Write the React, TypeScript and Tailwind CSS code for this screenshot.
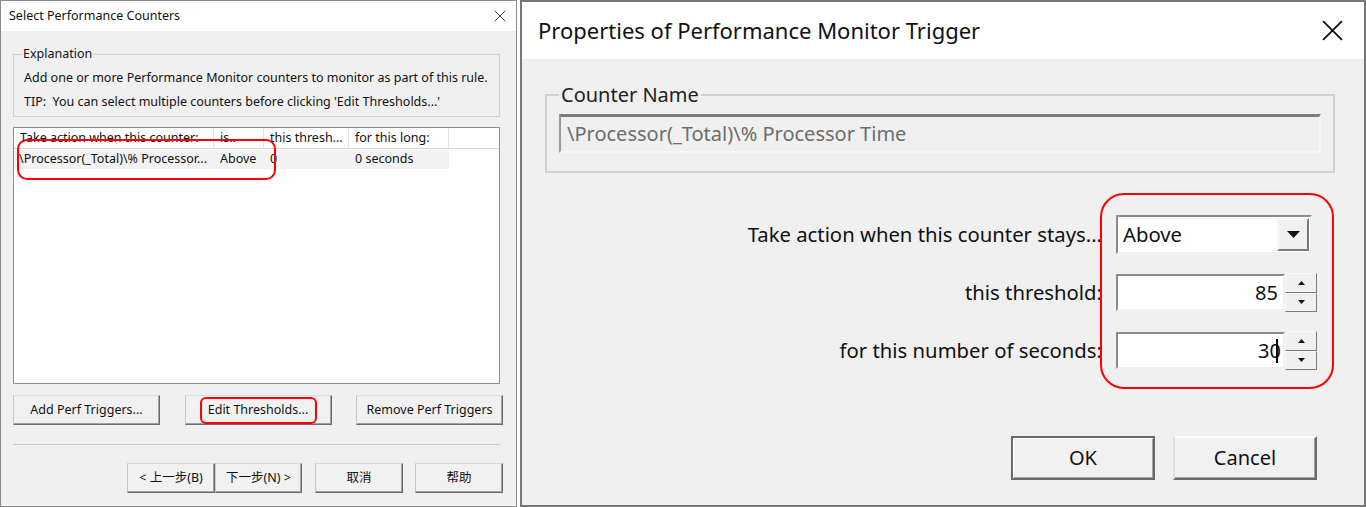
import React from "react";

const uiFont = { fontFamily: '"Noto Sans", "Noto Sans CJK SC", sans-serif' };

function CloseX({ size, stroke }: { size: number; stroke: number }) {
  return (
    <svg width={size} height={size} viewBox="0 0 20 20">
      <path d="M1 1 L19 19 M19 1 L1 19" stroke="#111" strokeWidth={stroke} fill="none" />
    </svg>
  );
}

function SmallButton({ label, className = "" }: { label: string; className?: string }) {
  return (
    <div
      className={
        "flex h-[30px] items-center justify-center border border-t-[#dcdcdc] border-l-[#c8c8c8] border-r-[#6b6b6b] border-b-[#6b6b6b] bg-[#f1f1f1] shadow-[inset_-1px_-1px_0_#a0a0a0] text-[12.5px] text-[#111] " +
        className
      }
    >
      {label}
    </div>
  );
}

function SelectCountersDialog() {
  return (
    <div className="relative flex h-[507px] w-[517px] flex-col border border-[#8a8a8a] bg-[#f0f0f0]" style={uiFont}>
      <div className="flex h-[30px] items-center justify-between bg-white pl-[8px] pr-[10px] text-[12.5px] text-[#111]">
        <span>Select Performance Counters</span>
        <CloseX size={12} stroke={1.3} />
      </div>

      <div className="flex flex-col pl-[12px] pt-[15px]">
        <fieldset className="w-[487px] border border-[#d0d0d0] pb-[2px] pl-[8px]">
          <legend className="px-[1px] text-[12.5px] leading-[16px] text-[#111]">Explanation</legend>
          <div className="pl-[2px] pt-[4px] text-[12.5px] leading-[24px] text-[#111]">
            <div>Add one or more Performance Monitor counters to monitor as part of this rule.</div>
            <div>TIP:&nbsp; You can select multiple counters before clicking 'Edit Thresholds...'</div>
          </div>
        </fieldset>

        <div className="mt-[10px] h-[257px] w-[487px] border border-[#8e8e8e] bg-white text-[12.5px] text-[#111]">
          <div className="flex h-[21px] border-b border-[#d5d5d5]">
            <div className="w-[200px] border-r border-[#e3e3e3] pl-[6px] leading-[20px]">Take action when this counter:</div>
            <div className="w-[50px] border-r border-[#e3e3e3] pl-[6px] leading-[20px]">is..</div>
            <div className="w-[85px] border-r border-[#e3e3e3] pl-[6px] leading-[20px]">this thresh...</div>
            <div className="w-[100px] border-r border-[#e3e3e3] pl-[6px] leading-[20px]">for this long:</div>
          </div>
          <div className="mt-[1px] flex h-[19px] w-[435px] items-center bg-[#f2f2f2]">
            <div className="w-[200px] pl-[5px]">\Processor(_Total)\% Processor...</div>
            <div className="w-[50px] pl-[6px]">Above</div>
            <div className="w-[85px] pl-[6px]">0</div>
            <div className="w-[100px] pl-[6px]">0 seconds</div>
          </div>
        </div>

        <div className="mt-[11px] flex w-[490px] justify-between">
          <SmallButton label="Add Perf Triggers..." className="w-[147px]" />
          <SmallButton label="Edit Thresholds..." className="w-[147px]" />
          <SmallButton label="Remove Perf Triggers" className="w-[147px]" />
        </div>

        <div className="mt-[19px] h-px w-[487px] bg-[#c8c8c8]" />

        <div className="mt-[18px] flex w-[490px] justify-end">
          <SmallButton label="< 上一步(B)" className="w-[88px]" />
          <SmallButton label="下一步(N) >" className="w-[87px]" />
          <SmallButton label="取消" className="ml-[13px] w-[88px]" />
          <SmallButton label="帮助" className="ml-[12px] w-[88px]" />
        </div>
      </div>

      <div className="absolute left-[16px] top-[138px] h-[41px] w-[259px] rounded-[10px] border-2 border-[#ff0000]" />
      <div className="absolute left-[199px] top-[396px] h-[27px] w-[117px] rounded-[6px] border-2 border-[#ff0000]" />
    </div>
  );
}

function SpinBox({ value, caret }: { value: string; caret?: boolean }) {
  return (
    <div className="flex h-[39px] items-center">
      <div className="flex h-[37px] w-[169px] items-center justify-end border-2 border-t-[#8c8c8c] border-l-[#8c8c8c] border-r-[#f0f0f0] border-b-[#f0f0f0] bg-white pr-[5px] text-[20px] text-[#111]">
        <span>{value}</span>
        {caret && <span className="ml-[-5px] h-[24px] w-[2px] bg-black" />}
      </div>
      <div className="flex h-[39px] w-[32px] flex-col">
        <div className="flex flex-1 items-center justify-center border border-t-[#f8f8f8] border-l-[#f8f8f8] border-r-[#7a7a7a] border-b-[#7a7a7a] bg-[#f0f0f0]">
          <svg width="7" height="4" viewBox="0 0 7 4"><path d="M3.5 0 L7 4 L0 4 Z" fill="#111" /></svg>
        </div>
        <div className="flex flex-1 items-center justify-center border border-t-[#f8f8f8] border-l-[#f8f8f8] border-r-[#7a7a7a] border-b-[#7a7a7a] bg-[#f0f0f0]">
          <svg width="7" height="4" viewBox="0 0 7 4"><path d="M0 0 L7 0 L3.5 4 Z" fill="#111" /></svg>
        </div>
      </div>
    </div>
  );
}

function BigButton({ label, isDefault }: { label: string; isDefault?: boolean }) {
  return (
    <div
      className={
        "flex h-[44px] w-[144px] items-center justify-center bg-[#f1f1f1] text-[20px] text-[#111] " +
        (isDefault
          ? "border-2 border-[#6a6a6a] shadow-[inset_1px_1px_0_#ffffff,inset_-1px_-1px_0_#a0a0a0]"
          : "border-2 border-t-[#fafafa] border-l-[#e0e0e0] border-r-[#6a6a6a] border-b-[#6a6a6a] shadow-[inset_-1px_-1px_0_#a0a0a0]")
      }
    >
      {label}
    </div>
  );
}

function TriggerPropertiesDialog() {
  return (
    <div className="relative flex h-[507px] w-[846px] flex-col border-2 border-[#777] bg-[#f0f0f0]" style={uiFont}>
      <div className="flex h-[57px] items-center justify-between bg-white pl-[16px] pr-[21px] text-[22px] text-[#111]">
        <span>Properties of Performance Monitor Trigger</span>
        <CloseX size={21} stroke={1.7} />
      </div>

      <div className="flex flex-col pl-[23px] pr-[29px] pt-[21px]">
        <fieldset className="h-[93px] border-2 border-[#cfcfcf] pl-[12px] pr-[12px]">
          <legend className="px-[2px] text-[20px] leading-[30px] text-[#222]">Counter Name</legend>
          <div className="mt-[4px] flex h-[39px] items-center border-2 border-t-[3px] border-t-[#7d7d7d] border-l-[#9a9a9a] border-r-[#f7f7f7] border-b-[#f7f7f7] bg-[#f0f0f0] pl-[6px] text-[20px] text-[#6d6d6d]">
            \Processor(_Total)\% Processor Time
          </div>
        </fieldset>

        <div className="mt-[42px] grid grid-cols-[auto_auto] items-center justify-end gap-x-[14px] gap-y-[19px] pr-[18px] text-[20.3px] text-[#111]">
          <div className="text-right">Take action when this counter stays...</div>
          <div className="flex h-[39px] w-[196px] items-center border-2 border-t-[#8c8c8c] border-l-[#8c8c8c] border-r-[#f0f0f0] border-b-[#f0f0f0] bg-white pr-[1px]">
            <span className="flex-1 pl-[5px]">Above</span>
            <div className="flex h-[33px] w-[32px] items-center justify-center border-2 border-t-[#f8f8f8] border-l-[#f8f8f8] border-r-[#7a7a7a] border-b-[#7a7a7a] bg-[#f0f0f0]">
              <svg width="13" height="7" viewBox="0 0 13 7"><path d="M0 0 L13 0 L6.5 7 Z" fill="#111" /></svg>
            </div>
          </div>
          <div className="text-right">this threshold:</div>
          <SpinBox value="85" />
          <div className="text-right">for this number of seconds:</div>
          <SpinBox value="30" caret />
        </div>

        <div className="mt-[66px] flex justify-end gap-[18px] pr-[18px]">
          <BigButton label="OK" isDefault />
          <BigButton label="Cancel" />
        </div>
      </div>

      <div className="absolute left-[578px] top-[191px] h-[196px] w-[234px] rounded-[24px] border-2 border-[#ff0000]" />
    </div>
  );
}

export default function App() {
  return (
    <div className="flex h-[507px] w-[1366px] gap-[3px] bg-white">
      <SelectCountersDialog />
      <TriggerPropertiesDialog />
    </div>
  );
}
